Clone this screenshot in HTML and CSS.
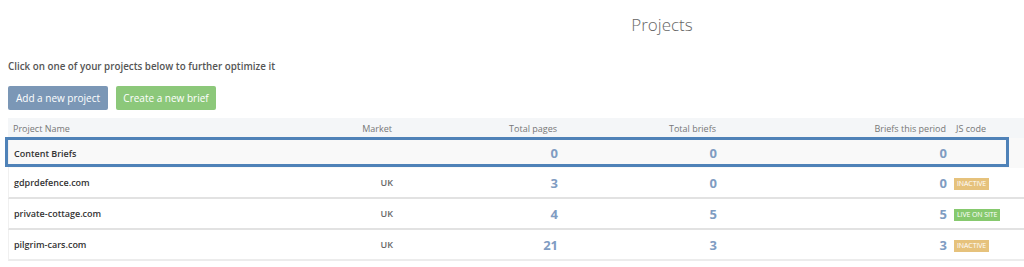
FILE: index.html
```html
<!DOCTYPE html>
<html lang="en">
<head>
    <meta charset="UTF-8">
    <title>Projects</title>
    <link rel="stylesheet" href="styles.css">
</head>
<body>

<header class="page-title">
    <h1>Projects</h1>
</header>

<p class="intro">Click on one of your projects below to further optimize it</p>

<div class="actions">
    <button class="btn btn-blue">Add a new project</button>
    <button class="btn btn-green">Create a new brief</button>
</div>

<div class="projects">
    <div class="row head">
        <div class="cell name">Project Name</div>
        <div class="cell num">Market</div>
        <div class="cell num">Total pages</div>
        <div class="cell num">Total briefs</div>
        <div class="cell num">Briefs this period</div>
        <div class="cell">JS code</div>
    </div>

    <div class="row selected">
        <div class="cell name">Content Briefs</div>
        <div class="cell market"></div>
        <div class="cell num value">0</div>
        <div class="cell num value">0</div>
        <div class="cell num value">0</div>
        <div class="cell"></div>
        <div class="highlight"></div>
    </div>

    <div class="row">
        <div class="cell name">gdprdefence.com</div>
        <div class="cell market">UK</div>
        <div class="cell num value">3</div>
        <div class="cell num value">0</div>
        <div class="cell num value">0</div>
        <div class="cell"><span class="badge inactive">INACTIVE</span></div>
    </div>

    <div class="row">
        <div class="cell name">private-cottage.com</div>
        <div class="cell market">UK</div>
        <div class="cell num value">4</div>
        <div class="cell num value">5</div>
        <div class="cell num value">5</div>
        <div class="cell"><span class="badge live">LIVE ON SITE</span></div>
    </div>

    <div class="row last">
        <div class="cell name">pilgrim-cars.com</div>
        <div class="cell market">UK</div>
        <div class="cell num value">21</div>
        <div class="cell num value">3</div>
        <div class="cell num value">3</div>
        <div class="cell"><span class="badge inactive">INACTIVE</span></div>
    </div>
</div>

</body>
</html>
```

FILE: styles.css
```css
body {
    margin: 0;
    padding: 0 0 0 8px;
    background-color: #ffffff;
    color: #555;
    font-family: 'Open Sans', sans-serif;
    overflow: hidden;
}

.page-title {
    margin-left: 292px;
    padding-top: 13px;
    text-align: center;
}

.page-title h1 {
    margin: 0;
    font-size: 17px;
    font-weight: 300;
    color: #666;
    line-height: 24px;
}

.intro {
    margin: 23px 0 0;
    font-size: 9.8px;
    font-weight: 600;
    color: #555;
    line-height: 14px;
}

.actions {
    display: flex;
    gap: 8px;
    margin-top: 12px;
}

.btn {
    width: 100px;
    height: 24px;
    border: none;
    border-radius: 2px;
    color: #fff;
    font-family: 'Open Sans', sans-serif;
    font-size: 10px;
    padding: 0;
    cursor: pointer;
}

.btn-blue {
    background-color: #7b97b6;
}

.btn-green {
    background-color: #8cc87a;
}

.projects {
    margin-top: 8px;
    width: 1030px;
}

.row {
    position: relative;
    display: grid;
    grid-template-columns: 292px 97px 165px 159px 230px 1fr;
    align-items: center;
    height: 29px;
    border-bottom: 2px solid #e2e2e2;
    border-left: 1px solid #f0f0f0;
    font-size: 9px;
}

.row.last {
    border-bottom-color: #ececec;
}

.row.head {
    height: 20px;
    background-color: #f4f6f8;
    border-bottom: none;
    border-left: none;
    color: #777;
}

.row.selected {
    height: 30px;
    background-color: #f9f9f9;
    border-bottom: none;
}

.cell {
    padding: 0 5px;
    white-space: nowrap;
}

.cell.num {
    text-align: right;
}

.cell.name {
    font-weight: 600;
    color: #333;
}

.row.head .cell.name {
    font-weight: 400;
    color: #777;
}

.cell.market {
    text-align: right;
    font-size: 9px;
    font-weight: 600;
    color: #666;
}

.cell.value {
    font-size: 13px;
    font-weight: 700;
    color: #7f9cc2;
}

.badge {
    display: inline-block;
    margin-left: -3px;
    padding: 1px 3px;
    font-size: 7px;
    line-height: 10px;
    color: #fff;
    letter-spacing: -0.1px;
}

.badge.inactive {
    background-color: #e6c27c;
}

.badge.live {
    background-color: #86c96e;
}

.highlight {
    position: absolute;
    left: -4px;
    top: -1px;
    width: 998px;
    height: 24px;
    border: 3px solid #4f82b8;
    pointer-events: none;
}
```
